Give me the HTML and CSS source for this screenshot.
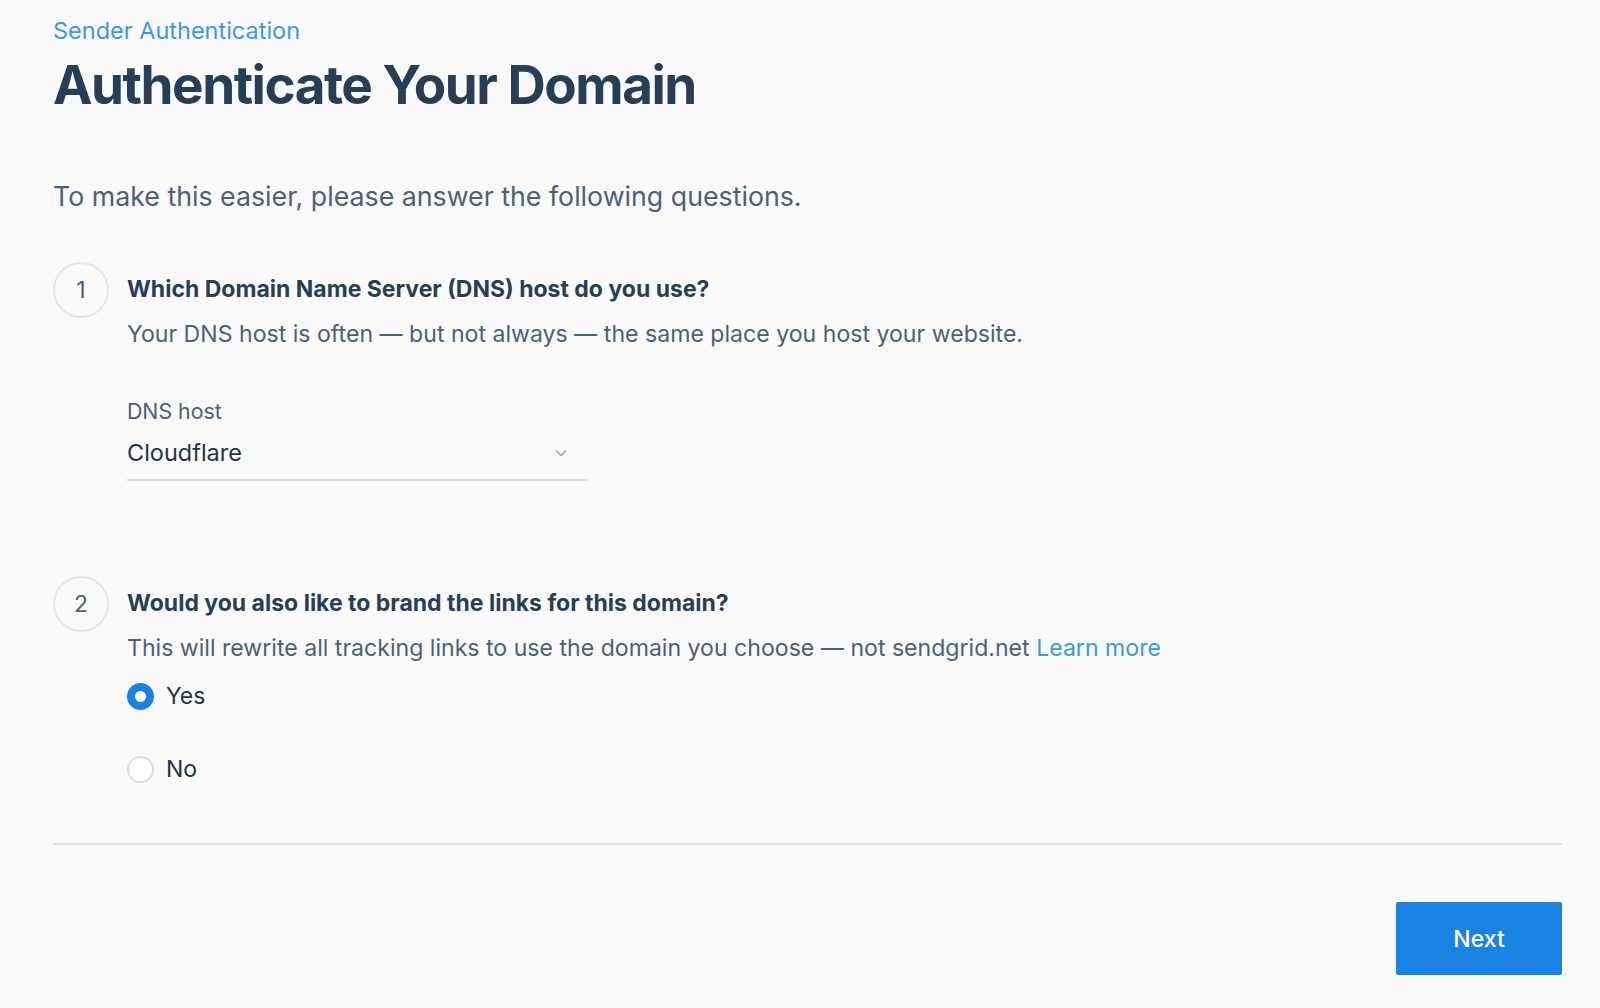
FILE: index.html
```html
<!DOCTYPE html>
<html>
<head>
<meta charset="utf-8">
<link rel="stylesheet" href="styles.css">
</head>
<body>
<div class="page">
  <header class="head">
    <a class="crumb" href="#">Sender Authentication</a>
    <h1 class="title">Authenticate Your Domain</h1>
  </header>
  <p class="intro">To make this easier, please answer the following questions.</p>

  <section class="step step-1">
    <div class="num">1</div>
    <div class="body">
      <h2 class="q">Which Domain Name Server (DNS) host do you use?</h2>
      <p class="desc">Your DNS host is often — but not always — the same place you host your website.</p>
      <div class="field">
        <label class="label">DNS host</label>
        <div class="select">
          <span class="value">Cloudflare</span>
          <svg class="chev" width="12" height="8" viewBox="0 0 12 8"><path d="M1 1.5 L6 6.5 L11 1.5" fill="none" stroke="#8a9aa9" stroke-width="1.3"/></svg>
        </div>
      </div>
    </div>
  </section>

  <section class="step step-2">
    <div class="num">2</div>
    <div class="body">
      <h2 class="q">Would you also like to brand the links for this domain?</h2>
      <p class="desc">This will rewrite all tracking links to use the domain you choose — not sendgrid.net <a class="link" href="#">Learn more</a></p>
      <div class="radios">
        <div class="radio checked"><span class="dot"></span><span class="rl">Yes</span></div>
        <div class="radio"><span class="dot"></span><span class="rl">No</span></div>
      </div>
    </div>
  </section>

  <hr class="rule">
  <div class="actions">
    <button class="btn">Next</button>
  </div>
</div>
</body>
</html>
```

FILE: styles.css
```css
* { box-sizing: border-box; }
html, body { margin: 0; padding: 0; }
body {
  background: #fafafa;
  font-family: "Inter", "Noto Sans", sans-serif;
  color: #294661;
  width: 1600px;
  height: 1008px;
  overflow: hidden;
}
.page {
  padding: 16px 38px 0 53px;
}
.head { display: flex; flex-direction: column; }
.crumb {
  color: #3c97e4;
  text-decoration: none;
  font-size: 23.5px;
  line-height: 30px;
}
.title {
  margin: 9px 0 0 0;
  font-size: 53px;
  line-height: 60px;
  font-weight: 700;
  letter-spacing: -1.5px;
  color: #263f57;
}
.intro {
  margin: 65px 0 0 0;
  font-size: 26.75px;
  line-height: 32px;
  color: #4b6079;
}
.step {
  display: flex;
  gap: 18px;
}
.step-1 { margin-top: 51px; }
.step-2 { margin-top: 96px; }
.num {
  width: 56px;
  height: 56px;
  border-radius: 50%;
  border: 2px solid #e3e7eb;
  display: flex;
  align-items: center;
  justify-content: center;
  font-size: 23px;
  color: #4b6079;
  flex: none;
  margin-top: -1px;
}
.body { display: flex; flex-direction: column; padding-top: 11px; }
.q {
  margin: 0;
  font-size: 23px;
  line-height: 30px;
  font-weight: 700;
  color: #263f57;
}
.desc {
  margin: 15px 0 0 0;
  font-size: 23.1px;
  line-height: 30px;
  color: #4b6079;
}
.link { color: #3c97e4; text-decoration: none; }
.field { margin-top: 48px; width: 460px; }
.label {
  display: block;
  font-size: 21.3px;
  line-height: 28px;
  color: #4b6079;
}
.select {
  margin-top: 13px;
  display: flex;
  align-items: center;
  justify-content: space-between;
  border-bottom: 2px solid #d9dee3;
  padding: 0 20px 11px 0;
}
.value { font-size: 23.5px; line-height: 30px; color: #1f344b; }
.chev { display: block; }
.radios { display: flex; flex-direction: column; gap: 46px; margin-top: 20px; }
.radio { display: flex; align-items: center; gap: 12px; }
.dot {
  width: 27px;
  height: 27px;
  border-radius: 50%;
  border: 2px solid #d9dee3;
  background: #fff;
  flex: none;
}
.radio.checked .dot {
  border: 8px solid #1a82e2;
  background: #fff;
}
.rl { font-size: 23px; line-height: 27px; color: #1f344b; }
.rule {
  margin: 60px 0 0 0;
  border: 0;
  border-top: 2px solid #e0e4e8;
}
.actions { display: flex; justify-content: flex-end; margin-top: 57px; }
.btn {
  width: 166px;
  height: 73px;
  background: #1a82e2;
  border: 0;
  border-radius: 2px;
  color: #fff;
  font-family: inherit;
  font-size: 23px;
  font-weight: 500;
}
```
